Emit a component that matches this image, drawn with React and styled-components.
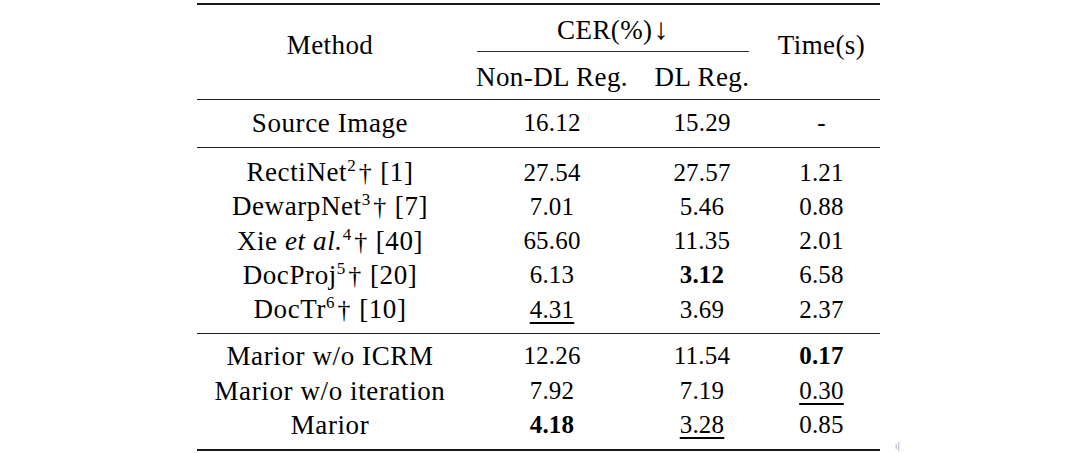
import React from "react";
import styled, { createGlobalStyle } from "styled-components";

const Global = createGlobalStyle`
  html, body { margin: 0; padding: 0; background: #fff; }
  body { width: 1080px; height: 453px; overflow: hidden; font-family: "Liberation Serif", "DejaVu Serif", serif; color: #000; }
`;

const COLS = "266px 178px 122px 117px";

const Page = styled.div`
  position: relative;
  width: 1080px;
  height: 453px;
  padding: 3px 0 0 197px;
  box-sizing: border-box;
  font-family: "Liberation Serif", "DejaVu Serif", serif;
  color: #000;
`;

const Table = styled.div`
  width: 683px;
  border-top: 2px solid #1a1a1a;
  border-bottom: 2px solid #1a1a1a;
`;

const Head = styled.div`
  display: grid;
  grid-template-columns: ${COLS};
  grid-template-rows: 47px 47px;
  border-bottom: 1px solid #1a1a1a;
`;

const HeadCell = styled.div`
  grid-column: ${(p) => p.$col};
  grid-row: ${(p) => p.$row};
  text-align: center;
  font-size: 27px;
  letter-spacing: 0.4px;
  line-height: 34px;
  padding-top: ${(p) => p.$pt || 0}px;
  white-space: nowrap;
`;

const SpanHead = styled.div`
  margin: 0 14px;
  padding-top: 8px;
  height: 38px;
  border-bottom: 1px solid #333;
  text-align: center;
  font-size: 27px;
  letter-spacing: 0.4px;
  line-height: 34px;
`;

const Arrow = styled.span`
  font-size: 30px;
  line-height: 0;
  margin-left: 1px;
`;

const Group = styled.div`
  padding: ${(p) => p.$pt}px 0 ${(p) => p.$pb}px;
  border-bottom: ${(p) => (p.$rule ? "1px solid #1a1a1a" : "none")};
`;

const Row = styled.div`
  display: grid;
  grid-template-columns: ${COLS};
  height: ${(p) => p.$h || 34.25}px;
  align-items: center;
`;

const Cell = styled.div`
  text-align: center;
  white-space: nowrap;
  font-size: ${(p) => (p.$num ? 25 : 27)}px;
  letter-spacing: ${(p) => (p.$num ? 0.2 : 0.6)}px;
  line-height: 34px;
  font-weight: ${(p) => (p.$bold ? 700 : 400)};
`;

const Under = styled.span`
  text-decoration: underline;
  text-decoration-thickness: 1.5px;
  text-underline-offset: 4px;
`;

const Sup = styled.span`
  font-size: 17px;
  line-height: 0;
  position: relative;
  top: -10px;
  letter-spacing: 0;
  margin-right: 3px;
`;

const Dagger = styled.span`
  font-size: 26px;
  margin-right: 8px;
`;

const Mark = styled.span`
  position: absolute;
  left: 895px;
  top: 442px;
  font-size: 8px;
  color: #9a9a9a;
  font-family: "DejaVu Sans", sans-serif;
  line-height: 10px;
`;

const rows1 = [
  { name: "RectiNet", sup: "2", ref: "[1]", a: "27.54", b: "27.57", c: "1.21" },
  { name: "DewarpNet", sup: "3", ref: "[7]", a: "7.01", b: "5.46", c: "0.88" },
  { name: "Xie", it: "et al.", sup: "4", ref: "[40]", a: "65.60", b: "11.35", c: "2.01" },
  { name: "DocProj", sup: "5", ref: "[20]", a: "6.13", b: "3.12", bb: true, c: "6.58" },
  { name: "DocTr", sup: "6", ref: "[10]", a: "4.31", au: true, b: "3.69", c: "2.37" },
];

const rows2 = [
  { name: "Marior w/o ICRM", a: "12.26", b: "11.54", c: "0.17", cb: true },
  { name: "Marior w/o iteration", a: "7.92", b: "7.19", c: "0.30", cu: true },
  { name: "Marior", a: "4.18", ab: true, b: "3.28", bu: true, c: "0.85" },
];

function Val({ v, u }) {
  return u ? <Under>{v}</Under> : v;
}

export default function App() {
  return (
    <Page>
      <Global />
      <Table>
        <Head>
          <HeadCell $col="1" $row="1 / 3" $pt={23}>Method</HeadCell>
          <HeadCell $col="2 / 4" $row="1">
            <SpanHead>CER(%)<Arrow>↓</Arrow></SpanHead>
          </HeadCell>
          <HeadCell $col="2" $row="2" $pt={8}>Non-DL Reg.</HeadCell>
          <HeadCell $col="3" $row="2" $pt={8}>DL Reg.</HeadCell>
          <HeadCell $col="4" $row="1 / 3" $pt={23}>Time(s)</HeadCell>
        </Head>
        <Group $pt={6} $pb={7} $rule>
          <Row $h={34}>
            <Cell>Source Image</Cell>
            <Cell $num>16.12</Cell>
            <Cell $num>15.29</Cell>
            <Cell $num>-</Cell>
          </Row>
        </Group>
        <Group $pt={7} $pb={7} $rule>
          {rows1.map((r) => (
            <Row key={r.name}>
              <Cell>
                {r.name}
                {r.it && <> <i>{r.it}</i></>}
                <Sup>{r.sup}</Sup>
                <Dagger>†</Dagger>
                {r.ref}
              </Cell>
              <Cell $num><Val v={r.a} u={r.au} /></Cell>
              <Cell $num $bold={r.bb}>{r.b}</Cell>
              <Cell $num>{r.c}</Cell>
            </Row>
          ))}
        </Group>
        <Group $pt={5} $pb={7}>
          {rows2.map((r) => (
            <Row key={r.name}>
              <Cell>{r.name}</Cell>
              <Cell $num $bold={r.ab}>{r.a}</Cell>
              <Cell $num><Val v={r.b} u={r.bu} /></Cell>
              <Cell $num $bold={r.cb}><Val v={r.c} u={r.cu} /></Cell>
            </Row>
          ))}
        </Group>
      </Table>
      <Mark>ı|</Mark>
    </Page>
  );
}
